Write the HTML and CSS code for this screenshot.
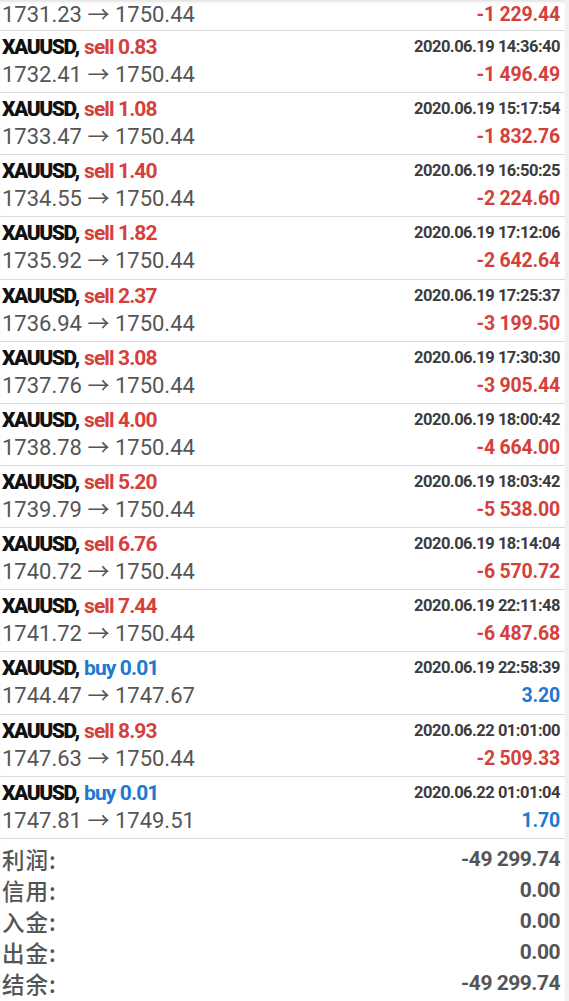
FILE: index.html
```html
<!DOCTYPE html>
<html lang="zh">
	<head>
		<meta charset="utf-8" />
		<title>历史</title>
		<link rel="stylesheet" href="styles.css">
	</head>

	<body>
		<div class="screen">
			<ul class="deals">
				<li class="deal cut">
					<div class="line">
						<span class="price">1731.23 → 1750.44</span>
						<span class="profit loss">-1 229.44</span>
					</div>
				</li>
				<li class="deal">
					<div class="line">
						<span class="title"><b class="symbol">XAUUSD,</b> <em class="sell">sell 0.83</em></span>
						<span class="time">2020.06.19 14:36:40</span>
					</div>
					<div class="line">
						<span class="price">1732.41 → 1750.44</span>
						<span class="profit loss">-1 496.49</span>
					</div>
				</li>
				<li class="deal">
					<div class="line">
						<span class="title"><b class="symbol">XAUUSD,</b> <em class="sell">sell 1.08</em></span>
						<span class="time">2020.06.19 15:17:54</span>
					</div>
					<div class="line">
						<span class="price">1733.47 → 1750.44</span>
						<span class="profit loss">-1 832.76</span>
					</div>
				</li>
				<li class="deal">
					<div class="line">
						<span class="title"><b class="symbol">XAUUSD,</b> <em class="sell">sell 1.40</em></span>
						<span class="time">2020.06.19 16:50:25</span>
					</div>
					<div class="line">
						<span class="price">1734.55 → 1750.44</span>
						<span class="profit loss">-2 224.60</span>
					</div>
				</li>
				<li class="deal">
					<div class="line">
						<span class="title"><b class="symbol">XAUUSD,</b> <em class="sell">sell 1.82</em></span>
						<span class="time">2020.06.19 17:12:06</span>
					</div>
					<div class="line">
						<span class="price">1735.92 → 1750.44</span>
						<span class="profit loss">-2 642.64</span>
					</div>
				</li>
				<li class="deal">
					<div class="line">
						<span class="title"><b class="symbol">XAUUSD,</b> <em class="sell">sell 2.37</em></span>
						<span class="time">2020.06.19 17:25:37</span>
					</div>
					<div class="line">
						<span class="price">1736.94 → 1750.44</span>
						<span class="profit loss">-3 199.50</span>
					</div>
				</li>
				<li class="deal">
					<div class="line">
						<span class="title"><b class="symbol">XAUUSD,</b> <em class="sell">sell 3.08</em></span>
						<span class="time">2020.06.19 17:30:30</span>
					</div>
					<div class="line">
						<span class="price">1737.76 → 1750.44</span>
						<span class="profit loss">-3 905.44</span>
					</div>
				</li>
				<li class="deal">
					<div class="line">
						<span class="title"><b class="symbol">XAUUSD,</b> <em class="sell">sell 4.00</em></span>
						<span class="time">2020.06.19 18:00:42</span>
					</div>
					<div class="line">
						<span class="price">1738.78 → 1750.44</span>
						<span class="profit loss">-4 664.00</span>
					</div>
				</li>
				<li class="deal">
					<div class="line">
						<span class="title"><b class="symbol">XAUUSD,</b> <em class="sell">sell 5.20</em></span>
						<span class="time">2020.06.19 18:03:42</span>
					</div>
					<div class="line">
						<span class="price">1739.79 → 1750.44</span>
						<span class="profit loss">-5 538.00</span>
					</div>
				</li>
				<li class="deal">
					<div class="line">
						<span class="title"><b class="symbol">XAUUSD,</b> <em class="sell">sell 6.76</em></span>
						<span class="time">2020.06.19 18:14:04</span>
					</div>
					<div class="line">
						<span class="price">1740.72 → 1750.44</span>
						<span class="profit loss">-6 570.72</span>
					</div>
				</li>
				<li class="deal">
					<div class="line">
						<span class="title"><b class="symbol">XAUUSD,</b> <em class="sell">sell 7.44</em></span>
						<span class="time">2020.06.19 22:11:48</span>
					</div>
					<div class="line">
						<span class="price">1741.72 → 1750.44</span>
						<span class="profit loss">-6 487.68</span>
					</div>
				</li>
				<li class="deal">
					<div class="line">
						<span class="title"><b class="symbol">XAUUSD,</b> <em class="buy">buy 0.01</em></span>
						<span class="time">2020.06.19 22:58:39</span>
					</div>
					<div class="line">
						<span class="price">1744.47 → 1747.67</span>
						<span class="profit gain">3.20</span>
					</div>
				</li>
				<li class="deal">
					<div class="line">
						<span class="title"><b class="symbol">XAUUSD,</b> <em class="sell">sell 8.93</em></span>
						<span class="time">2020.06.22 01:01:00</span>
					</div>
					<div class="line">
						<span class="price">1747.63 → 1750.44</span>
						<span class="profit loss">-2 509.33</span>
					</div>
				</li>
				<li class="deal">
					<div class="line">
						<span class="title"><b class="symbol">XAUUSD,</b> <em class="buy">buy 0.01</em></span>
						<span class="time">2020.06.22 01:01:04</span>
					</div>
					<div class="line">
						<span class="price">1747.81 → 1749.51</span>
						<span class="profit gain">1.70</span>
					</div>
				</li>
			</ul>

			<dl class="summary">
				<div class="sum-row"><dt>利润:</dt><dd>-49 299.74</dd></div>
				<div class="sum-row"><dt>信用:</dt><dd>0.00</dd></div>
				<div class="sum-row"><dt>入金:</dt><dd>0.00</dd></div>
				<div class="sum-row"><dt>出金:</dt><dd>0.00</dd></div>
				<div class="sum-row"><dt>结余:</dt><dd>-49 299.74</dd></div>
			</dl>
		</div>
	</body>
</html>
```

FILE: styles.css
```css
html,
body {
	margin: 0;
	padding: 0;
	background: #fff;
	font-family: Roboto, "Noto Sans CJK SC", sans-serif;
}
.screen {
	min-height: 1001px;
	border-right: 4px solid #f1f1f1;
	box-shadow: inset 0 3px 3px -1px #e4e4e4;
}
.deals {
	list-style: none;
	margin: 0;
	padding: 0;
}
.deal {
	padding: 2px 5px 3.15px 2px;
	border-bottom: 1px solid #dadada;
}
.deal.cut {
	padding-top: 1px;
	padding-bottom: 1px;
}
.line {
	display: flex;
	justify-content: space-between;
	align-items: center;
	height: 28px;
	line-height: 28px;
}
.title {
	font-size: 21px;
	font-weight: 700;
	color: #111;
}
.title .symbol {
	letter-spacing: -1.4px;
}
.title em {
	font-style: normal;
	letter-spacing: -0.9px;
}
.sell,
.loss {
	color: #d5413a;
}
.buy,
.gain {
	color: #2079cf;
}
.time {
	font-size: 16.5px;
	font-weight: 700;
	letter-spacing: -0.5px;
	color: #3c3c3c;
}
.price {
	font-size: 22px;
	color: #555;
}
.profit {
	font-size: 19.5px;
	font-weight: 700;
	letter-spacing: -0.2px;
}
.summary {
	margin: 0;
	padding: 5px 5px 0 2px;
}
.sum-row {
	display: flex;
	justify-content: space-between;
	align-items: center;
	height: 31px;
	line-height: 31px;
	color: #555;
}
.sum-row dt {
	font-family: "Noto Sans CJK SC", sans-serif;
	font-size: 22.5px;
	font-weight: 500;
	letter-spacing: 1px;
}
.sum-row dd {
	margin: 0;
	font-size: 21px;
	font-weight: 700;
	letter-spacing: -0.5px;
}
```
